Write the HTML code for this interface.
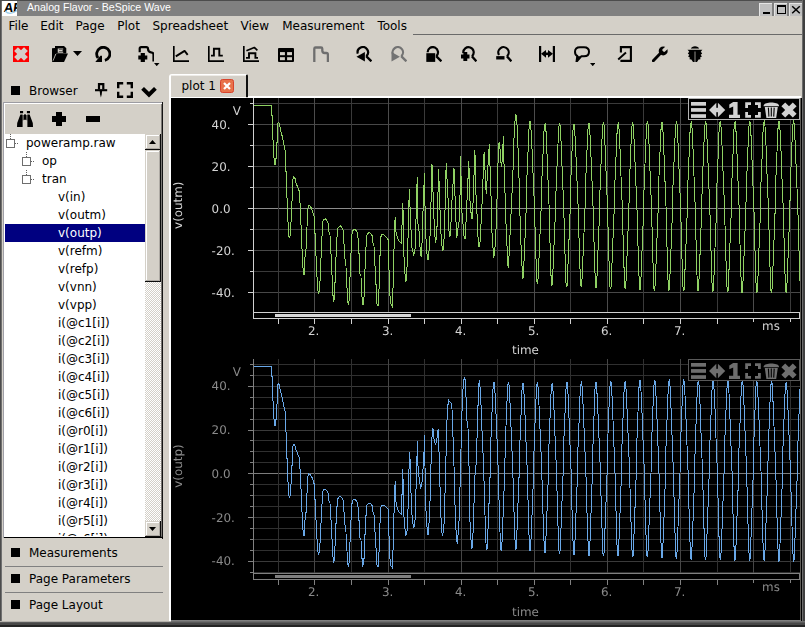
<!DOCTYPE html><html><head><meta charset="utf-8"><title>BeSpice Wave</title><style>
html,body{margin:0;padding:0;background:#d4d0c8;overflow:hidden}
#win{position:relative;width:805px;height:627px;overflow:hidden;background:#d4d0c8}
#win div,#win svg{position:absolute;display:block}
.t{white-space:nowrap}
</style></head><body><div id="win">
<div style="left:0px;top:0px;width:805px;height:1px;background:#4c4c4c;"></div>
<div style="left:0px;top:1px;width:805px;height:15px;background:#808080;"></div>
<div style="left:2px;top:1px;width:15px;height:15px;background:#fff;"></div>
<div class="t" style="left:2px;top:1px;width:15px;height:15px;overflow:hidden"><span style="position:absolute;left:1.6px;top:-1px;font:bold 13px/15px 'Liberation Sans',sans-serif;color:#000;letter-spacing:-0.2px;transform:skewX(-7deg);display:block">AF</span></div>
<svg style="left:2px;top:10px;" width="15" height="6" viewBox="0 0 15 6"><path d="M3 1 C6 4.2 10 4.2 15 0.5" fill="none" stroke="#9ccce8" stroke-width="1.1"/></svg>
<div class="t " style="left:27px;top:-0.2px;font-size:10.6px;color:#fff;font-family:'Liberation Sans','Liberation Sans',sans-serif;line-height:15px">Analog Flavor - BeSpice Wave</div>
<div style="left:759px;top:3px;width:13px;height:13px;background:#c0c0c0;box-shadow:inset 1px 1px 0 #e4e4e4"></div>
<div style="left:774px;top:3px;width:13px;height:13px;background:#c0c0c0;box-shadow:inset 1px 1px 0 #e4e4e4"></div>
<div style="left:789px;top:3px;width:13px;height:13px;background:#c0c0c0;box-shadow:inset 1px 1px 0 #e4e4e4"></div>
<div style="left:763px;top:12px;width:7px;height:2px;background:#000;"></div>
<div style="left:777px;top:5px;width:7px;height:6px;border:1px solid #000;border-top-width:2px"></div>
<svg style="left:791px;top:5px;" width="10" height="9" viewBox="0 0 10 9"><path d="M1.2 1.3 L8.8 8.2 M8.8 1.3 L1.2 8.2" stroke="#000" stroke-width="1.5"/></svg>
<div class="t " style="left:8.4px;top:18.4px;font-size:12px;color:#000;font-family:'DejaVu Sans','Liberation Sans',sans-serif;line-height:17px">File</div>
<div class="t " style="left:40.2px;top:18.4px;font-size:12px;color:#000;font-family:'DejaVu Sans','Liberation Sans',sans-serif;line-height:17px">Edit</div>
<div class="t " style="left:75.5px;top:18.4px;font-size:12px;color:#000;font-family:'DejaVu Sans','Liberation Sans',sans-serif;line-height:17px">Page</div>
<div class="t " style="left:117.3px;top:18.4px;font-size:12px;color:#000;font-family:'DejaVu Sans','Liberation Sans',sans-serif;line-height:17px">Plot</div>
<div class="t " style="left:152.5px;top:18.4px;font-size:12px;color:#000;font-family:'DejaVu Sans','Liberation Sans',sans-serif;line-height:17px">Spreadsheet</div>
<div class="t " style="left:240.5px;top:18.4px;font-size:12px;color:#000;font-family:'DejaVu Sans','Liberation Sans',sans-serif;line-height:17px">View</div>
<div class="t " style="left:282.2px;top:18.4px;font-size:12px;color:#000;font-family:'DejaVu Sans','Liberation Sans',sans-serif;line-height:17px">Measurement</div>
<div class="t " style="left:377.4px;top:18.4px;font-size:12px;color:#000;font-family:'DejaVu Sans','Liberation Sans',sans-serif;line-height:17px">Tools</div>
<div style="left:413px;top:34px;width:389px;height:1px;background:#6a6a6a;"></div>
<svg style="left:13px;top:46px;" width="16" height="16" viewBox="0 0 16 16"><rect x="0" y="0" width="16" height="16" fill="#ff0000"/><g transform="translate(8 8) rotate(45)" fill="#d4d0c8"><rect x="-7" y="-2.7" width="14" height="5.4"/><rect x="-2.7" y="-7" width="5.4" height="14"/></g></svg>
<svg style="left:52px;top:46px;" width="16" height="16" viewBox="0 0 16 16"><path d="M0 2.3 L3 2 V0 H12 L14.3 2.3 V7.6 H4 L1.2 15.8 H0 Z" fill="#000"/><path d="M11.2 3 H6.3 V6.2 H11.2 M6.3 4.6 H10.6" fill="none" stroke="#d4d0c8" stroke-width="1.15"/><path d="M4 7.6 H16 L12 15.9 H0.3 Z" fill="#000"/><path d="M3.8 8 L1 14.8" stroke="#d4d0c8" stroke-width="0.8"/></svg>
<svg style="left:95px;top:46px;" width="16" height="16" viewBox="0 0 16 16"><path d="M9.9 14.3 A6.6 6.6 0 1 0 3.1 12" fill="none" stroke="#000" stroke-width="2.8"/><path d="M0.3 15.9 H7 V9.8 H5.4 Z" fill="#000"/></svg>
<svg style="left:138px;top:46px;" width="16" height="16" viewBox="0 0 16 16"><path d="M1.7 6.2 V2.6 Q1.7 1.2 3.1 1.2 H8.3 Q9.9 1.2 10 2.8 Q10.1 6.2 13 6.4 Q15.5 6.6 15.5 8.6 V15.6" fill="none" stroke="#000" stroke-width="2.2"/><path d="M0.3 11.5 H9.3 M4.8 7 V16" stroke="#000" stroke-width="4.2"/></svg>
<svg style="left:173px;top:46px;" width="16" height="16" viewBox="0 0 16 16"><path d="M0.8 0 V15.2 H16" fill="none" stroke="#000" stroke-width="1.7"/><path d="M2.8 10.4 L11.6 4.9 L14.7 8.8" fill="none" stroke="#000" stroke-width="1.9" stroke-linejoin="round"/></svg>
<svg style="left:208px;top:46px;" width="16" height="16" viewBox="0 0 16 16"><path d="M0.8 0 V15.2 H16" fill="none" stroke="#000" stroke-width="1.7"/><path d="M3 9.6 H5.9 V2.8 H11.3 V9.6 H14.8" fill="none" stroke="#000" stroke-width="1.9"/></svg>
<svg style="left:243px;top:46px;" width="16" height="16" viewBox="0 0 16 16"><path d="M0.8 0 V15.2 H16" fill="none" stroke="#000" stroke-width="1.7"/><path d="M3 11.9 H6 V7.3 H12.4 V11.9 H15" fill="none" stroke="#000" stroke-width="1.9"/><path d="M3.4 4.7 L11.3 1.5 L14.4 4.3" fill="none" stroke="#000" stroke-width="1.7" stroke-linejoin="round"/></svg>
<svg style="left:278px;top:46px;" width="16" height="16" viewBox="0 0 16 16"><rect x="0" y="2" width="16" height="14" rx="1" fill="#000"/><rect x="2" y="6.1" width="4.9" height="3.1" fill="#d4d0c8"/><rect x="9.1" y="6.1" width="4.9" height="3.1" fill="#d4d0c8"/><rect x="2" y="11.2" width="4.9" height="3" fill="#d4d0c8"/><rect x="9.1" y="11.2" width="4.9" height="3" fill="#d4d0c8"/></svg>
<svg style="left:313px;top:46px;" width="16" height="16" viewBox="0 0 16 16"><path d="M1.3 16 V2.8 Q1.3 1.5 2.6 1.5 H8 Q9.3 1.5 9.3 2.8 V4.5 Q9.3 7 11.8 7 H13.5 Q14.9 7 14.9 8.4 V16" fill="none" stroke="#6e6e6e" stroke-width="2.3"/></svg>
<svg style="left:356px;top:46px;" width="16" height="16" viewBox="0 0 16 16"><path d="M1.78 7.65 A5.2 5.2 0 1 1 10.28 10.16" fill="none" stroke="#000" stroke-width="2.2"/><path d="M10.20 10.10 L15.4 15.3" stroke="#000" stroke-width="2.4" stroke-linecap="butt"/><path d="M0.5 10.7 L8.9 6 V15.5 Z" fill="#000"/></svg>
<svg style="left:391px;top:46px;" width="16" height="16" viewBox="0 0 16 16"><path d="M2.30 8.90 A5.2 5.2 0 1 1 10.28 10.16" fill="none" stroke="#737373" stroke-width="2.2"/><path d="M10.20 10.10 L15.4 15.3" stroke="#737373" stroke-width="2.4" stroke-linecap="butt"/><path d="M8.9 10.7 L0.5 6 V15.5 Z" fill="#737373"/></svg>
<svg style="left:426px;top:46px;" width="16" height="16" viewBox="0 0 16 16"><path d="M1.60 6.30 A5.2 5.2 0 1 1 10.28 10.16" fill="none" stroke="#000" stroke-width="2.2"/><path d="M10.20 10.10 L15.4 15.3" stroke="#000" stroke-width="2.4" stroke-linecap="butt"/><rect x="0.3" y="7.2" width="8.9" height="8.7" fill="#000"/></svg>
<svg style="left:461px;top:46px;" width="16" height="16" viewBox="0 0 16 16"><path d="M2.35 7.12 A5.2 5.2 0 1 1 10.98 10.26" fill="none" stroke="#000" stroke-width="2.2"/><path d="M10.90 10.20 L15.4 15.3" stroke="#000" stroke-width="2.4" stroke-linecap="butt"/><path d="M0 10.5 H8.5 M4.3 6 V15" stroke="#000" stroke-width="3.9"/></svg>
<svg style="left:496px;top:46px;" width="16" height="16" viewBox="0 0 16 16"><path d="M3.00 9.00 A5.2 5.2 0 1 1 10.98 10.26" fill="none" stroke="#000" stroke-width="2.2"/><path d="M10.90 10.20 L15.4 15.3" stroke="#000" stroke-width="2.4" stroke-linecap="butt"/><path d="M0.2 11.8 H8.5" stroke="#000" stroke-width="3.4"/></svg>
<svg style="left:539px;top:46px;" width="16" height="16" viewBox="0 0 16 16"><path d="M1.1 0 V16 M14.9 0 V16" stroke="#000" stroke-width="2.2"/><path d="M2 7.8 L7 3.9 V11.7 Z M14 7.8 L9 3.9 V11.7 Z" fill="#000"/><path d="M6.5 7.8 H9.5" stroke="#000" stroke-width="2.6"/></svg>
<svg style="left:574px;top:46px;" width="16" height="16" viewBox="0 0 16 16"><path d="M6 1.3 H10 C13.5 1.3 15 3 15 5.8 C15 8.8 13 10.3 10 10.3 H7.2 L2.5 15.8 L3.3 10 C2 9.4 1 8 1 5.8 C1 3 2.5 1.3 6 1.3 Z" fill="none" stroke="#000" stroke-width="2" stroke-linejoin="round"/><path d="M3 10 L2.2 16 L7.4 10.6 Z" fill="#000"/></svg>
<svg style="left:617px;top:46px;" width="16" height="16" viewBox="0 0 16 16"><path d="M3.9 6.6 V1.1 H13.9 V14.9 H3.4" fill="none" stroke="#000" stroke-width="2.1"/><path d="M1.2 13.5 L9 6.5" stroke="#000" stroke-width="1.9"/></svg>
<svg style="left:652px;top:46px;" width="16" height="16" viewBox="0 0 16 16"><path d="M1.3 14.7 L9 6.8" stroke="#000" stroke-width="2.9" stroke-linecap="round"/><circle cx="11.2" cy="4.9" r="4.5" fill="#000"/><g transform="translate(11.2 4.9) rotate(-42)"><rect x="-0.3" y="-1.7" width="8" height="3.4" rx="1.2" fill="#d4d0c8"/></g></svg>
<svg style="left:687px;top:46px;" width="16" height="16" viewBox="0 0 16 16"><path d="M0.4 3.5 L15.5 3.5 L13.8 5.8 L15.2 7.4 L13.7 8.8 L14.9 10.6 L13.1 11.5 L13.5 13.3 L11.6 13.6 L10 16 H6 L4.3 13.6 L2.5 13.3 L2.9 11.5 L1.1 10.6 L2.3 8.8 L0.8 7.4 L2.2 5.8 Z" fill="#000"/><path d="M3.9 2.8 C4.2 -0.6 11.8 -0.6 12.1 2.8 Z" fill="#000"/><path d="M0 3.2 H16" stroke="#d4d0c8" stroke-width="0.8"/><path d="M8 5.5 V16" stroke="#d4d0c8" stroke-width="0.7"/></svg>
<svg style="left:73px;top:51px;" width="9" height="5" viewBox="0 0 9 5"><path d="M0 0 H9 L4.5 5 Z" fill="#000"/></svg>
<svg style="left:154px;top:63px;" width="5.5" height="3.2" viewBox="0 0 5.5 3.2"><path d="M0 0 H5.5 L2.75 3.2 Z" fill="#000"/></svg>
<svg style="left:589.8px;top:63px;" width="5.5" height="3.2" viewBox="0 0 5.5 3.2"><path d="M0 0 H5.5 L2.75 3.2 Z" fill="#000"/></svg>
<div style="left:11.4px;top:86.4px;width:8.6px;height:8.4px;background:#000;"></div>
<div class="t " style="left:29px;top:82px;font-size:12px;color:#000;font-family:'DejaVu Sans','Liberation Sans',sans-serif;line-height:18px">Browser</div>
<svg style="left:95px;top:82px;" width="13" height="16" viewBox="0 0 13 16"><path d="M4 7.5 V2.2 H8.3 V7.5" fill="none" stroke="#000" stroke-width="2.2"/><path d="M-0.3 8.2 H12.2" stroke="#000" stroke-width="2.1"/><path d="M4.7 9 H7.1 L6.7 12.5 L5.9 15.6 L5.1 12.5 Z" fill="#000"/></svg>
<svg style="left:117px;top:82px;" width="16" height="16" viewBox="0 0 16 16"><path d="M1.2 6.2 V1.2 H6.2 M9.8 1.2 H14.8 V6.2 M14.8 9.8 V14.8 H9.8 M6.2 14.8 H1.2 V9.8" fill="none" stroke="#000" stroke-width="2.4"/></svg>
<svg style="left:141px;top:86px;" width="17" height="12" viewBox="0 0 17 12"><path d="M1.6 2.4 L8 8.6 L14.4 2.4" fill="none" stroke="#000" stroke-width="4"/></svg>
<div style="left:3px;top:102px;width:160px;height:1px;background:#9c9ca2;"></div>
<div style="left:3px;top:102px;width:1px;height:436px;background:#a0a0a8;"></div>
<div style="left:4px;top:103px;width:158px;height:1px;background:#fff;"></div>
<div style="left:4px;top:103px;width:1px;height:434px;background:#fff;"></div>
<div style="left:162px;top:102px;width:1px;height:437px;background:#141414;"></div>
<div style="left:161px;top:104px;width:1px;height:434px;background:#7a7874;"></div>
<div style="left:4px;top:537px;width:159px;height:1px;background:#000;"></div>
<div style="left:5px;top:536px;width:157px;height:1px;background:#5a5a5a;"></div>
<svg style="left:17px;top:111px;" width="16" height="16" viewBox="0 0 16 16"><path d="M3 0 H6.1 V2.3 H3 Z M9.9 0 H13 V2.3 H9.9 Z" fill="#000"/><path d="M3.4 3.4 H5.6 L5.6 16 H0 L0.2 12 Z M10.4 3.4 H12.6 L15.8 12 L16 16 H10.4 Z" fill="#000"/><rect x="7" y="3.4" width="2" height="5.4" fill="#000"/><path d="M5.6 4 H7 V9 L5.6 9.5 Z M10.4 4 H9 V9 L10.4 9.5 Z" fill="#000" opacity="0.55"/></svg>
<svg style="left:51px;top:111px;" width="16" height="16" viewBox="0 0 16 16"><path d="M1 8.1 H15 M8 1 V15" stroke="#000" stroke-width="6" stroke-linejoin="round"/></svg>
<svg style="left:85px;top:111px;" width="16" height="16" viewBox="0 0 16 16"><path d="M1 8 H15" stroke="#000" stroke-width="6"/></svg>
<div style="left:5px;top:134px;width:140px;height:403px;background:#fff;"></div>
<div style="left:5px;top:133px;width:140px;height:403px;overflow:hidden">
<div class="t" style="left:21px;top:1px;font-size:12px;line-height:18px;color:#000;font-family:'DejaVu Sans',sans-serif">poweramp.raw</div>
<div class="t" style="left:37px;top:19px;font-size:12px;line-height:18px;color:#000;font-family:'DejaVu Sans',sans-serif">op</div>
<div class="t" style="left:37px;top:37px;font-size:12px;line-height:18px;color:#000;font-family:'DejaVu Sans',sans-serif">tran</div>
<div style="left:0px;top:91px;width:140px;height:18px;background:#000080"></div>
<div class="t" style="left:53px;top:55px;font-size:12px;line-height:18px;color:#000;font-family:'DejaVu Sans',sans-serif">v(in)</div>
<div class="t" style="left:53px;top:73px;font-size:12px;line-height:18px;color:#000;font-family:'DejaVu Sans',sans-serif">v(outm)</div>
<div class="t" style="left:53px;top:91px;font-size:12px;line-height:18px;color:#fff;font-family:'DejaVu Sans',sans-serif">v(outp)</div>
<div class="t" style="left:53px;top:109px;font-size:12px;line-height:18px;color:#000;font-family:'DejaVu Sans',sans-serif">v(refm)</div>
<div class="t" style="left:53px;top:127px;font-size:12px;line-height:18px;color:#000;font-family:'DejaVu Sans',sans-serif">v(refp)</div>
<div class="t" style="left:53px;top:145px;font-size:12px;line-height:18px;color:#000;font-family:'DejaVu Sans',sans-serif">v(vnn)</div>
<div class="t" style="left:53px;top:163px;font-size:12px;line-height:18px;color:#000;font-family:'DejaVu Sans',sans-serif">v(vpp)</div>
<div class="t" style="left:53px;top:181px;font-size:12px;line-height:18px;color:#000;font-family:'DejaVu Sans',sans-serif">i(@c1[i])</div>
<div class="t" style="left:53px;top:199px;font-size:12px;line-height:18px;color:#000;font-family:'DejaVu Sans',sans-serif">i(@c2[i])</div>
<div class="t" style="left:53px;top:217px;font-size:12px;line-height:18px;color:#000;font-family:'DejaVu Sans',sans-serif">i(@c3[i])</div>
<div class="t" style="left:53px;top:235px;font-size:12px;line-height:18px;color:#000;font-family:'DejaVu Sans',sans-serif">i(@c4[i])</div>
<div class="t" style="left:53px;top:253px;font-size:12px;line-height:18px;color:#000;font-family:'DejaVu Sans',sans-serif">i(@c5[i])</div>
<div class="t" style="left:53px;top:271px;font-size:12px;line-height:18px;color:#000;font-family:'DejaVu Sans',sans-serif">i(@c6[i])</div>
<div class="t" style="left:53px;top:289px;font-size:12px;line-height:18px;color:#000;font-family:'DejaVu Sans',sans-serif">i(@r0[i])</div>
<div class="t" style="left:53px;top:307px;font-size:12px;line-height:18px;color:#000;font-family:'DejaVu Sans',sans-serif">i(@r1[i])</div>
<div class="t" style="left:53px;top:325px;font-size:12px;line-height:18px;color:#000;font-family:'DejaVu Sans',sans-serif">i(@r2[i])</div>
<div class="t" style="left:53px;top:343px;font-size:12px;line-height:18px;color:#000;font-family:'DejaVu Sans',sans-serif">i(@r3[i])</div>
<div class="t" style="left:53px;top:361px;font-size:12px;line-height:18px;color:#000;font-family:'DejaVu Sans',sans-serif">i(@r4[i])</div>
<div class="t" style="left:53px;top:379px;font-size:12px;line-height:18px;color:#000;font-family:'DejaVu Sans',sans-serif">i(@r5[i])</div>
<div class="t" style="left:53px;top:397px;font-size:12px;line-height:18px;color:#000;font-family:'DejaVu Sans',sans-serif">i(@r6[i])</div>
</div>
<div style="left:6px;top:139px;width:7px;height:7px;border:1px solid #6e6e6e;background:#fff"></div>
<div style="left:22px;top:157px;width:7px;height:7px;border:1px solid #6e6e6e;background:#fff"></div>
<div style="left:22px;top:175px;width:7px;height:7px;border:1px solid #6e6e6e;background:#fff"></div>
<div style="left:15px;top:143px;width:3px;height:1px;background:none;background:repeating-linear-gradient(to right,#606060 0 1px,transparent 1px 2px)"></div>
<div style="left:10px;top:134px;width:1px;height:5px;background:none;background:repeating-linear-gradient(to bottom,#606060 0 1px,transparent 1px 2px)"></div>
<div style="left:31px;top:161px;width:3px;height:1px;background:none;background:repeating-linear-gradient(to right,#606060 0 1px,transparent 1px 2px)"></div>
<div style="left:26px;top:152px;width:1px;height:5px;background:none;background:repeating-linear-gradient(to bottom,#606060 0 1px,transparent 1px 2px)"></div>
<div style="left:31px;top:179px;width:3px;height:1px;background:none;background:repeating-linear-gradient(to right,#606060 0 1px,transparent 1px 2px)"></div>
<div style="left:26px;top:170px;width:1px;height:5px;background:none;background:repeating-linear-gradient(to bottom,#606060 0 1px,transparent 1px 2px)"></div>
<div style="left:145px;top:134px;width:16px;height:403px;background:#e9e7e3;background:repeating-conic-gradient(#fff 0 25%,#d4d0c8 0 50%) 0 0/2px 2px"></div>
<div style="left:145px;top:134px;width:16px;height:16px;background:#d4d0c8;box-shadow:inset -1px -1px 0 #0c0c0c,inset 1px 1px 0 #d4d0c8,inset -2px -2px 0 #aeaaa4,inset 2px 2px 0 #fff"></div>
<div style="left:145px;top:150px;width:16px;height:132px;background:#d4d0c8;box-shadow:inset -1px -1px 0 #0c0c0c,inset 1px 1px 0 #d4d0c8,inset -2px -2px 0 #aeaaa4,inset 2px 2px 0 #fff"></div>
<div style="left:145px;top:521px;width:16px;height:16px;background:#d4d0c8;box-shadow:inset -1px -1px 0 #0c0c0c,inset 1px 1px 0 #d4d0c8,inset -2px -2px 0 #aeaaa4,inset 2px 2px 0 #fff"></div>
<svg style="left:149px;top:140px;" width="7" height="4" viewBox="0 0 7 4"><path d="M0 4 L3.5 0 L7 4 Z" fill="#000"/></svg>
<svg style="left:149px;top:527px;" width="7" height="4" viewBox="0 0 7 4"><path d="M0 0 L3.5 4 L7 0 Z" fill="#000"/></svg>
<div style="left:11.4px;top:548.3px;width:8.6px;height:8.4px;background:#000;"></div>
<div class="t " style="left:29px;top:543.5px;font-size:12px;color:#000;font-family:'DejaVu Sans','Liberation Sans',sans-serif;line-height:18px">Measurements</div>
<div style="left:11.4px;top:574.3px;width:8.6px;height:8.4px;background:#000;"></div>
<div class="t " style="left:29px;top:569.5px;font-size:12px;color:#000;font-family:'DejaVu Sans','Liberation Sans',sans-serif;line-height:18px">Page Parameters</div>
<div style="left:11.4px;top:600.3px;width:8.6px;height:8.4px;background:#000;"></div>
<div class="t " style="left:29px;top:595.5px;font-size:12px;color:#000;font-family:'DejaVu Sans','Liberation Sans',sans-serif;line-height:18px">Page Layout</div>
<div style="left:5px;top:566px;width:158px;height:1px;background:#808080;"></div>
<div style="left:5px;top:592px;width:158px;height:1px;background:#808080;"></div>
<div style="left:169px;top:74px;width:79px;height:23px;background:#d4d0c8;border-left:2px solid #fff;border-top:1px solid #fff;border-right:2px solid #101010;border-top-left-radius:3px;border-top-right-radius:2px;box-sizing:border-box"></div>
<div style="left:171px;top:75px;width:75px;height:1px;background:#eeece8;"></div>
<div class="t " style="left:181.5px;top:77px;font-size:12px;color:#000;font-family:'DejaVu Sans','Liberation Sans',sans-serif;line-height:18px">plot 1</div>
<svg style="left:220px;top:79px;" width="14" height="14" viewBox="0 0 14 14"><rect x="0.5" y="0.5" width="13" height="13" rx="2" fill="#e8724a" stroke="#d8432c"/><path d="M4 4 L10 10 M10 4 L4 10" stroke="#fff" stroke-width="2.2"/></svg>
<div style="left:248px;top:96px;width:553px;height:2px;background:#fff;"></div>
<div style="left:171px;top:97px;width:75px;height:1px;background:#fff;"></div>
<div style="left:169px;top:96px;width:2px;height:525px;background:#fff;"></div>
<div style="left:171px;top:98px;width:631px;height:523px;background:#000;"></div>
<div style="left:800px;top:98px;width:1px;height:523px;background:#5e5c58;"></div>
<div style="left:171px;top:620px;width:630px;height:1px;background:#808080;"></div>
<svg style="left:0;top:0;will-change:transform" width="805" height="627" viewBox="0 0 805 627" shape-rendering="crispEdges" text-rendering="geometricPrecision"><path d="M254 292.5 H800" stroke="#484848"/>
<path d="M254 271.5 H800" stroke="#3a3a3a"/>
<path d="M254 250.5 H800" stroke="#484848"/>
<path d="M254 229.5 H800" stroke="#3a3a3a"/>
<path d="M254 208.5 H800" stroke="#8c8c8c"/>
<path d="M254 187.5 H800" stroke="#3a3a3a"/>
<path d="M254 166.5 H800" stroke="#484848"/>
<path d="M254 145.5 H800" stroke="#3a3a3a"/>
<path d="M254 124.5 H800" stroke="#484848"/>
<path d="M254 103.5 H800" stroke="#3a3a3a"/>
<path d="M278.5 98 V312" stroke="#3a3a3a"/>
<path d="M314.5 98 V312" stroke="#4c4c4c"/>
<path d="M351.5 98 V312" stroke="#3a3a3a"/>
<path d="M388.5 98 V312" stroke="#4c4c4c"/>
<path d="M424.5 98 V312" stroke="#3a3a3a"/>
<path d="M461.5 98 V312" stroke="#4c4c4c"/>
<path d="M497.5 98 V312" stroke="#3a3a3a"/>
<path d="M534.5 98 V312" stroke="#4c4c4c"/>
<path d="M570.5 98 V312" stroke="#3a3a3a"/>
<path d="M607.5 98 V312" stroke="#4c4c4c"/>
<path d="M643.5 98 V312" stroke="#3a3a3a"/>
<path d="M680.5 98 V312" stroke="#4c4c4c"/>
<path d="M717.5 98 V312" stroke="#3a3a3a"/>
<path d="M753.5 98 V312" stroke="#4c4c4c"/>
<path d="M790.5 98 V312" stroke="#3a3a3a"/>
<polyline points="253.5,105.5 271.4,105.5 271.7,115.4 272.6,116.3 272.6,139.7 273.5,140.5 273.5,157.0 274.3,158.5 274.3,164.6 275.6,164.6 275.6,158.9 276.4,158.0 276.4,143.2 277.3,142.3 277.3,124.0 278.3,122.3 279.2,123.2 280.4,129.3 282.2,136.3 283.9,145.0 285.3,151.0 285.7,171.0 286.5,172.0 286.9,198.0 287.7,199.0 287.7,221.8 288.6,222.7 288.6,235.7 289.5,237.4 290.3,235.7 290.3,222.7 291.2,221.8 291.2,201.5 292.3,200.6 292.3,182.3 293.5,177.1 294.9,178.0 296.1,183.2 297.8,187.6 299.2,191.0 299.9,202.3 300.4,207.0 300.4,224.4 301.7,225.3 301.7,248.7 302.7,249.6 302.7,267.9 303.4,268.7 303.4,274.5 304.6,274.5 304.6,267.9 305.3,249.6 306.0,248.7 306.0,227.9 307.0,227.0 307.4,209.6 308.8,205.5 310.0,206.0 311.7,208.7 313.5,214.0 314.3,217.4 314.7,233.0 315.7,234.8 315.7,255.7 316.6,256.6 317.0,276.6 317.8,278.3 317.8,290.5 318.7,293.0 319.6,290.5 319.6,281.8 320.4,280.0 320.4,259.2 321.3,257.4 321.3,236.6 322.2,235.7 322.5,221.8 323.9,219.5 325.1,218.8 326.5,220.0 328.3,223.5 329.1,233.0 330.0,234.8 330.3,253.0 331.2,254.0 331.4,274.0 332.3,275.7 332.3,294.0 333.1,295.7 333.5,301.8 334.3,299.0 334.9,282.7 335.7,281.0 335.7,257.4 336.6,256.6 337.0,237.4 337.8,235.7 337.8,228.7 339.0,226.7 340.1,225.8 341.8,227.5 343.4,230.5 343.9,243.5 344.8,245.3 345.1,264.4 346.0,266.1 346.2,286.0 347.0,287.9 347.4,301.0 348.3,304.4 349.1,301.0 349.5,278.3 350.3,276.6 350.5,254.0 351.4,252.2 351.7,234.8 352.6,233.1 353.0,230.5 354.3,229.0 356.0,230.5 357.5,233.0 358.2,240.0 358.7,253.0 359.9,254.8 360.0,274.0 361.0,275.7 361.3,295.7 362.2,297.4 362.7,305.3 363.5,303.5 363.9,297.4 364.4,295.7 364.8,269.6 365.7,267.9 365.7,247.9 366.5,246.1 366.5,235.7 367.7,234.0 369.1,232.6 370.9,233.6 372.6,236.6 373.1,244.4 374.0,246.1 374.3,264.4 375.2,266.1 375.6,283.5 376.4,285.3 376.6,301.0 377.3,305.6 378.7,305.6 379.0,288.7 379.9,287.0 379.9,255.7 380.7,254.0 381.0,236.6 381.8,234.8 383.9,234.8 386.5,237.4 388.3,240.0 388.6,269.6 389.5,271.3 389.5,292.2 391.0,304.4 392.3,306.5 392.8,295.7 393.7,262.7 394.6,224.4 395.4,216.6 395.8,231.3 397.2,236.6 398.9,240.9 401.2,243.2 401.9,231.3 402.4,202.9 403.3,214.0 403.6,247.9 404.7,271.3 405.9,281.8 406.7,274.8 407.6,254.0 408.5,219.2 409.3,189.3 410.7,224.4 412.0,247.9 413.7,254.8 414.9,252.2 415.8,226.1 417.2,177.1 418.0,224.4 419.3,233.1 420.3,252.2 421.2,256.6 421.9,247.0 422.7,219.2 424.5,173.1 425.3,224.4 426.7,252.2 428.0,260.0 428.8,254.0 430.2,233.1 432.0,164.4 434.2,224.4 435.4,242.7 436.3,238.3 437.2,223.5 438.6,169.3 440.7,229.6 441.9,245.3 442.9,251.0 444.1,238.3 445.0,210.5 446.2,163.2 448.5,207.0 448.8,229.6 449.9,237.4 450.7,229.6 451.6,207.0 454.0,168.4 455.4,207.0 456.3,229.6 456.8,238.3 457.7,229.6 458.9,224.4 459.8,207.0 460.7,156.3 461.5,207.0 462.7,220.9 464.1,236.6 465.0,239.2 465.9,224.4 466.7,207.0 468.8,161.5 470.2,207.0 471.1,213.1 472.0,219.2 472.8,208.7 474.9,150.2 476.3,207.0 477.2,215.7 478.0,236.6 478.9,247.3 480.1,241.8 481.0,224.4 481.9,207.0 484.1,152.3 486.2,193.7 489.3,144.1 491.4,207.0 492.0,233.0 493.7,258.3 494.9,248.7 496.3,224.4 496.8,207.0 497.7,172.8 498.6,145.0 499.3,142.3 500.7,155.4 501.2,166.7 502.4,160.0 503.3,136.3 504.1,167.6 505.0,192.8 505.5,207.0 506.2,229.6 507.3,252.2 508.1,267.9 509.3,252.2 510.6,220.9 511.4,207.0 513.2,165.8 514.0,138.0 515.4,115.0 516.6,116.3 517.2,129.3 518.4,156.3 519.4,191.9 520.1,219.2 521.2,250.5 522.4,273.1 522.4,273.1 522.5,274.0 522.6,275.1 522.6,276.1 522.7,277.5 522.7,278.5 522.8,279.1 522.8,279.2 523.3,277.3 523.9,263.9 525.0,238.1 526.4,203.8 526.8,180.2 528.1,149.6 529.0,129.0 529.6,122.4 530.1,121.1 530.6,122.4 531.8,143.8 533.0,173.1 534.3,202.3 535.3,237.4 536.2,265.3 536.9,281.1 537.4,283.5 537.9,281.6 538.6,268.0 539.7,241.8 541.2,207.0 541.7,183.2 543.1,152.1 544.0,131.2 544.7,124.5 545.2,123.2 545.7,124.5 546.7,145.9 547.8,175.1 549.0,204.2 549.9,239.3 550.7,267.1 551.3,282.9 551.8,285.3 552.4,283.4 553.0,269.7 554.1,243.4 555.6,208.4 556.2,184.4 557.6,153.1 558.5,132.2 559.1,125.4 559.7,124.1 560.2,125.4 561.3,146.9 562.4,176.3 563.7,205.7 564.6,241.0 565.5,269.0 566.1,284.9 566.6,287.3 567.1,285.3 567.7,271.5 568.8,244.9 570.2,209.5 570.6,185.1 571.9,153.5 572.8,132.3 573.4,125.4 573.9,124.1 574.4,125.4 575.6,146.9 576.8,176.3 578.1,205.7 579.1,241.0 580.0,269.0 580.7,284.9 581.2,287.3 581.7,285.3 582.4,271.4 583.5,244.6 585.0,209.0 585.5,184.6 586.9,152.7 587.8,131.4 588.5,124.5 589.0,123.2 589.5,124.5 590.6,146.3 591.8,176.1 593.0,205.8 594.0,241.5 594.9,269.9 595.5,285.9 596.0,288.4 596.5,286.4 597.2,272.4 598.2,245.4 599.7,209.6 600.1,185.0 601.5,152.9 602.3,131.5 603.0,124.5 603.5,123.2 604.0,124.5 605.1,146.4 606.2,176.3 607.5,206.2 608.4,242.0 609.3,270.5 609.9,286.6 610.4,289.1 611.0,287.1 611.6,273.0 612.7,246.0 614.2,210.0 614.8,185.2 616.2,153.1 617.1,131.5 617.7,124.5 618.3,123.2 618.8,124.5 619.9,146.4 621.0,176.3 622.3,206.2 623.2,242.0 624.1,270.5 624.7,286.6 625.2,289.1 625.7,287.1 626.4,273.0 627.4,246.0 628.9,210.0 629.3,185.2 630.7,153.1 631.5,131.5 632.2,124.5 632.7,123.2 633.2,124.5 634.4,146.5 635.6,176.4 636.9,206.4 637.9,242.3 638.8,271.0 639.5,287.1 640.0,289.6 640.5,287.6 641.2,273.4 642.2,246.1 643.7,209.8 644.1,184.9 645.5,152.4 646.3,130.7 647.0,123.6 647.5,122.3 648.0,123.6 649.1,145.8 650.2,176.1 651.5,206.4 652.4,242.7 653.3,271.7 653.9,288.0 654.4,290.5 654.9,288.5 655.6,274.2 656.7,246.8 658.1,210.3 658.6,185.2 660.0,152.6 660.9,130.7 661.6,123.6 662.1,122.3 662.6,123.6 663.7,145.8 664.8,176.1 666.0,206.4 666.9,242.7 667.7,271.7 668.3,288.0 668.8,290.5 669.3,288.5 670.0,274.2 671.1,246.9 672.5,210.5 673.0,185.5 674.4,152.9 675.3,131.1 676.0,124.0 676.5,122.7 677.0,124.0 678.2,146.3 679.3,176.7 680.6,207.0 681.6,243.4 682.4,272.4 683.1,288.8 683.6,291.3 684.1,289.3 684.8,274.9 685.9,247.3 687.3,210.5 687.8,185.3 689.2,152.5 690.1,130.5 690.8,123.4 691.3,122.0 691.8,123.4 692.9,145.7 694.0,176.2 695.2,206.7 696.1,243.2 696.9,272.3 697.5,288.8 698.0,291.3 698.5,289.3 699.2,274.9 700.3,247.3 701.7,210.5 702.2,185.3 703.6,152.5 704.5,130.5 705.2,123.4 705.7,122.0 706.2,123.4 707.4,145.8 708.5,176.5 709.8,207.1 710.8,243.9 711.6,273.1 712.3,289.6 712.8,292.2 713.3,290.2 714.0,275.6 715.0,247.8 716.5,210.8 716.9,185.3 718.3,152.2 719.1,130.0 719.8,122.9 720.3,121.5 720.8,122.9 722.0,145.4 723.2,176.1 724.5,206.8 725.5,243.7 726.4,273.1 727.1,289.6 727.6,292.2 728.1,290.2 728.8,275.6 729.8,247.8 731.3,210.8 731.7,185.3 733.1,152.2 733.9,130.0 734.6,122.9 735.1,121.5 735.6,122.9 736.7,145.5 737.8,176.4 739.1,207.3 740.0,244.4 740.9,273.9 741.5,290.5 742.0,293.1 742.6,291.0 743.2,276.5 744.3,248.5 745.8,211.2 746.4,185.7 747.8,152.4 748.7,130.1 749.3,122.9 749.9,121.5 750.4,122.9 751.5,145.5 752.6,176.4 753.9,207.3 754.8,244.4 755.7,273.9 756.3,290.5 756.8,293.1 757.3,291.0 758.0,276.4 759.0,248.4 760.5,211.1 760.9,185.4 762.3,152.1 763.1,129.7 763.8,122.5 764.3,121.1 764.8,122.5 766.0,145.2 767.1,176.1 768.4,207.1 769.4,244.3 770.2,273.8 770.9,290.5 771.4,293.1 771.9,291.0 772.6,276.4 773.7,248.4 775.1,211.1 775.6,185.4 777.0,152.1 777.9,129.7 778.6,122.5 779.1,121.1 779.6,122.5 780.8,145.2 781.9,176.1 783.2,207.1 784.2,244.3 785.0,273.8 785.7,290.5 786.2,293.1 786.7,291.0 787.3,276.5 788.4,248.5 789.8,211.2 790.3,185.7 791.6,152.4 792.5,130.1 793.1,122.9 793.6,121.5 794.1,122.9 795.3,145.5 796.5,176.4 797.8,207.3 798.8,244.4 799.7,273.9 800.0,281.1" fill="none" stroke="#8fd163" stroke-width="1" shape-rendering="crispEdges"/>
<path d="M253.5 98 V318.5 M253 312.5 H800 M253 318.5 H800 M799.5 312 V319" stroke="#d0d0d0" fill="none"/>
<path d="M248 292.5 H253" stroke="#d0d0d0"/>
<path d="M250 271.5 H253" stroke="#d0d0d0"/>
<path d="M248 250.5 H253" stroke="#d0d0d0"/>
<path d="M250 229.5 H253" stroke="#d0d0d0"/>
<path d="M248 208.5 H253" stroke="#d0d0d0"/>
<path d="M250 187.5 H253" stroke="#d0d0d0"/>
<path d="M248 166.5 H253" stroke="#d0d0d0"/>
<path d="M250 145.5 H253" stroke="#d0d0d0"/>
<path d="M248 124.5 H253" stroke="#d0d0d0"/>
<path d="M250 103.5 H253" stroke="#d0d0d0"/>
<path d="M278.5 319 V324" stroke="#d0d0d0"/>
<path d="M314.5 319 V324" stroke="#d0d0d0"/>
<path d="M351.5 319 V324" stroke="#d0d0d0"/>
<path d="M388.5 319 V324" stroke="#d0d0d0"/>
<path d="M424.5 319 V324" stroke="#d0d0d0"/>
<path d="M461.5 319 V324" stroke="#d0d0d0"/>
<path d="M497.5 319 V324" stroke="#d0d0d0"/>
<path d="M534.5 319 V324" stroke="#d0d0d0"/>
<path d="M570.5 319 V324" stroke="#d0d0d0"/>
<path d="M607.5 319 V324" stroke="#d0d0d0"/>
<path d="M643.5 319 V324" stroke="#d0d0d0"/>
<path d="M680.5 319 V324" stroke="#d0d0d0"/>
<path d="M717.5 319 V324" stroke="#d0d0d0"/>
<path d="M753.5 319 V322" stroke="#d0d0d0"/>
<path d="M790.5 319 V322" stroke="#d0d0d0"/>
<rect x="275" y="314" width="136" height="3" fill="#d8d8d8"/>
<text x="211.6" y="296.6" fill="#d4d4d4" font-family="DejaVu Sans, sans-serif" font-size="11.9">-40.</text>
<text x="211.6" y="254.6" fill="#d4d4d4" font-family="DejaVu Sans, sans-serif" font-size="11.9">-20.</text>
<text x="211.6" y="212.6" fill="#d4d4d4" font-family="DejaVu Sans, sans-serif" font-size="11.9">0.0</text>
<text x="211.6" y="170.6" fill="#d4d4d4" font-family="DejaVu Sans, sans-serif" font-size="11.9">20.</text>
<text x="211.6" y="128.6" fill="#d4d4d4" font-family="DejaVu Sans, sans-serif" font-size="11.9">40.</text>
<text x="241" y="114.8" text-anchor="end" fill="#d4d4d4" font-family="DejaVu Sans, sans-serif" font-size="11.9">V</text>
<text x="313.7" y="334.8" text-anchor="middle" fill="#d4d4d4" font-family="DejaVu Sans, sans-serif" font-size="11.9">2.</text>
<text x="387.7" y="334.8" text-anchor="middle" fill="#d4d4d4" font-family="DejaVu Sans, sans-serif" font-size="11.9">3.</text>
<text x="460.7" y="334.8" text-anchor="middle" fill="#d4d4d4" font-family="DejaVu Sans, sans-serif" font-size="11.9">4.</text>
<text x="533.7" y="334.8" text-anchor="middle" fill="#d4d4d4" font-family="DejaVu Sans, sans-serif" font-size="11.9">5.</text>
<text x="606.7" y="334.8" text-anchor="middle" fill="#d4d4d4" font-family="DejaVu Sans, sans-serif" font-size="11.9">6.</text>
<text x="679.7" y="334.8" text-anchor="middle" fill="#d4d4d4" font-family="DejaVu Sans, sans-serif" font-size="11.9">7.</text>
<text x="771" y="329.6" text-anchor="middle" fill="#d4d4d4" font-family="DejaVu Sans, sans-serif" font-size="11.9">ms</text>
<text x="525.5" y="354.4" text-anchor="middle" fill="#d4d4d4" font-family="DejaVu Sans, sans-serif" font-size="11.9">time</text>
<text transform="translate(182.2 205.2) rotate(-90)" text-anchor="middle" fill="#d4d4d4" font-family="DejaVu Sans, sans-serif" font-size="11.9">v(outm)</text>
<rect x="688.5" y="98.5" width="111" height="21" fill="#000" stroke="#b4b4b4"/>
<g shape-rendering="geometricPrecision"><g fill="#d2d2d2" stroke="none"><rect x="691" y="102" width="15" height="3.7"/><rect x="691" y="108.1" width="15" height="3.7"/><rect x="691" y="114.2" width="15" height="3.7"/><path d="M709 110 L716.3 102.8 V117.2 Z M725.2 110 L717.9 102.8 V117.2 Z"/><rect x="715" y="107.8" width="5" height="4.4"/><path d="M733.2 102 H737.6 V114.8 H740 V118 H729 V114.8 H733.2 V106.6 L729.3 108.2 V104.6 Z"/></g>
<path d="M746.6 108 V103.6 H751 M755 103.6 H759.4 V108 M759.4 112 V116.4 H755 M751 116.4 H746.6 V112" fill="none" stroke="#d2d2d2" stroke-width="2.8"/>
<g fill="#d2d2d2"><path d="M763.6 105.4 C765 101.6 777.6 101.6 779 105.4 V106.2 H763.6 Z"/><path d="M764.8 107 H777.8 L776.2 118 H766.4 Z"/></g><path d="M768.4 107.6 L768.9 116.6 M771.3 107.6 V116.6 M774.2 107.6 L773.7 116.6" stroke="#000" stroke-width="1.1"/>
<path d="M783.3 104.3 L794.7 115.7 M794.7 104.3 L783.3 115.7" stroke="#d2d2d2" stroke-width="5.4"/></g><path d="M254 572.5 H800" stroke="#303030"/>
<path d="M254 561.5 H800" stroke="#3a3a3a"/>
<path d="M254 550.5 H800" stroke="#303030"/>
<path d="M254 539.5 H800" stroke="#303030"/>
<path d="M254 528.5 H800" stroke="#303030"/>
<path d="M254 517.5 H800" stroke="#3a3a3a"/>
<path d="M254 506.5 H800" stroke="#303030"/>
<path d="M254 495.5 H800" stroke="#303030"/>
<path d="M254 484.5 H800" stroke="#303030"/>
<path d="M254 473.5 H800" stroke="#7c7c7c"/>
<path d="M254 462.5 H800" stroke="#303030"/>
<path d="M254 451.5 H800" stroke="#303030"/>
<path d="M254 440.5 H800" stroke="#303030"/>
<path d="M254 430.5 H800" stroke="#3a3a3a"/>
<path d="M254 419.5 H800" stroke="#303030"/>
<path d="M254 408.5 H800" stroke="#303030"/>
<path d="M254 397.5 H800" stroke="#303030"/>
<path d="M254 386.5 H800" stroke="#3a3a3a"/>
<path d="M254 375.5 H800" stroke="#303030"/>
<path d="M254 364.5 H800" stroke="#303030"/>
<path d="M278.5 359 V573" stroke="#303030"/>
<path d="M314.5 359 V573" stroke="#464646"/>
<path d="M351.5 359 V573" stroke="#303030"/>
<path d="M388.5 359 V573" stroke="#464646"/>
<path d="M424.5 359 V573" stroke="#303030"/>
<path d="M461.5 359 V573" stroke="#464646"/>
<path d="M497.5 359 V573" stroke="#303030"/>
<path d="M534.5 359 V573" stroke="#464646"/>
<path d="M570.5 359 V573" stroke="#303030"/>
<path d="M607.5 359 V573" stroke="#464646"/>
<path d="M643.5 359 V573" stroke="#303030"/>
<path d="M680.5 359 V573" stroke="#464646"/>
<path d="M717.5 359 V573" stroke="#303030"/>
<path d="M753.5 359 V573" stroke="#464646"/>
<path d="M790.5 359 V573" stroke="#303030"/>
<polyline points="253.5,366.3 271.4,366.3 271.7,376.3 272.6,377.2 272.6,400.7 273.5,401.5 273.5,418.1 274.3,419.6 274.3,425.7 275.6,425.7 275.6,420.1 276.4,419.2 276.4,404.6 277.3,403.7 277.3,385.7 278.3,384.0 279.2,384.9 280.4,390.9 282.2,397.8 283.9,406.3 285.3,412.3 285.7,431.9 286.5,432.9 286.9,458.5 287.7,459.5 287.7,481.9 288.6,482.8 288.6,495.6 289.5,497.3 290.3,495.8 290.3,484.4 291.2,483.6 291.2,465.9 292.3,465.1 292.3,449.1 293.5,444.5 294.9,445.3 296.1,450.2 297.8,454.3 299.2,457.5 299.9,468.1 300.4,472.5 300.4,488.7 301.7,489.6 301.7,511.5 302.7,512.3 302.7,529.4 303.4,530.2 303.4,535.6 304.6,535.6 304.6,529.7 305.3,513.3 306.0,512.5 306.0,493.9 307.0,493.1 307.4,477.5 308.8,473.8 310.0,474.3 311.7,476.7 313.5,481.6 314.3,484.7 314.7,498.9 315.7,500.6 315.7,519.7 316.6,520.5 317.0,538.8 317.8,540.4 317.8,551.5 318.7,553.8 319.6,551.6 319.6,544.0 320.4,542.5 320.4,524.3 321.3,522.8 321.3,504.6 322.2,503.8 322.5,491.7 323.9,489.7 325.1,489.1 326.5,490.2 328.3,493.3 329.1,501.7 330.0,503.2 330.3,519.3 331.2,520.2 331.4,537.9 332.3,539.4 332.3,555.6 333.1,557.1 333.5,562.5 334.3,560.1 334.9,545.9 335.7,544.4 335.7,523.9 336.6,523.2 337.0,506.5 337.8,505.0 337.8,498.9 339.0,497.2 340.1,496.4 341.8,497.9 343.4,500.5 343.9,512.0 344.8,513.6 345.1,530.4 346.0,531.9 346.2,549.5 347.0,551.2 347.4,562.7 348.3,565.7 349.1,562.7 349.5,542.6 350.3,541.1 350.5,521.1 351.4,519.5 351.7,504.1 352.6,502.6 353.0,500.3 354.3,499.0 356.0,500.3 357.5,502.5 358.2,508.6 358.7,520.0 359.9,521.6 360.0,538.3 361.0,539.8 361.3,557.3 362.2,558.8 362.7,565.7 363.5,564.1 363.9,558.9 364.4,557.4 364.8,534.9 365.7,533.4 365.7,516.2 366.5,514.6 366.5,505.7 367.7,504.2 369.1,503.0 370.9,503.9 372.6,506.5 373.1,513.3 374.0,514.7 374.3,530.7 375.2,532.1 375.6,547.3 376.4,548.8 376.6,562.5 377.3,566.5 378.7,566.5 379.0,551.8 379.9,550.4 379.9,523.2 380.7,521.8 381.0,506.7 381.8,505.1 383.9,505.1 386.5,507.4 388.3,509.6 388.6,535.5 389.5,537.0 389.5,555.2 391.0,565.9 392.3,567.7 392.8,557.3 393.7,525.6 394.6,488.8 395.4,481.3 395.8,500.8 397.2,507.7 398.9,512.1 401.2,514.3 401.9,502.5 402.4,469.5 403.3,483.4 403.6,511.2 404.7,526.9 405.9,535.6 407.1,530.3 408.0,509.5 408.8,480.8 409.3,452.3 410.7,466.0 411.1,500.8 412.3,519.9 413.7,527.7 414.9,523.4 415.8,495.6 416.7,466.0 417.5,441.3 418.0,466.0 418.9,476.4 420.7,488.6 421.9,483.4 422.7,471.2 423.6,466.0 424.5,435.3 425.0,466.0 425.5,500.8 426.7,525.1 428.0,534.7 428.8,526.9 429.9,506.0 430.7,471.2 431.6,450.0 432.3,428.3 433.3,430.0 434.2,441.0 435.4,444.0 436.7,442.0 437.5,431.0 438.4,430.0 439.4,466.0 439.8,479.9 440.7,513.0 441.9,532.1 442.7,536.4 444.1,523.4 445.0,493.8 445.9,461.3 446.7,427.4 447.6,406.6 448.8,400.5 451.1,403.1 452.0,409.2 452.8,435.3 453.7,442.2 454.0,466.0 454.9,502.5 456.0,529.5 457.2,544.3 458.4,530.3 459.3,516.4 460.1,483.4 460.1,466.0 461.0,449.2 461.5,428.3 462.4,398.7 463.6,380.5 464.5,378.2 465.5,380.5 465.9,397.0 466.7,398.7 467.1,426.6 468.0,428.3 468.5,452.7 469.0,466.0 469.0,486.9 469.9,519.9 471.1,541.7 472.0,548.6 472.8,539.0 473.7,513.0 474.9,476.4 475.8,466.0 476.0,465.0 476.3,457.8 476.8,444.0 477.5,425.6 477.7,413.0 478.4,396.5 478.8,385.5 479.1,382.0 479.3,381.3 479.8,382.7 481.0,405.0 482.2,435.4 483.6,465.8 484.6,502.3 485.5,531.4 486.2,547.8 486.7,550.3 487.2,548.3 487.8,534.0 488.9,506.6 490.3,470.1 490.7,445.1 492.0,412.5 492.9,390.6 493.5,383.5 494.0,382.2 494.5,383.6 495.7,405.9 496.9,436.3 498.1,466.7 499.1,503.2 500.0,532.3 500.7,548.7 501.2,551.2 501.7,549.2 502.3,534.9 503.4,507.5 504.8,471.0 505.2,446.0 506.5,413.4 507.4,391.5 508.0,384.4 508.5,383.1 509.0,384.4 510.2,406.4 511.4,436.3 512.7,466.3 513.7,502.2 514.6,530.9 515.3,547.0 515.8,549.5 516.3,547.5 516.9,533.4 517.9,506.2 519.3,470.1 519.8,445.3 521.1,413.1 521.9,391.4 522.5,384.4 523.0,383.1 523.5,384.4 524.7,406.6 525.8,436.9 527.1,467.2 528.1,503.5 528.9,532.4 529.6,548.7 530.1,551.2 530.6,549.2 531.2,534.9 532.3,507.6 533.7,471.2 534.1,446.2 535.4,413.6 536.3,391.8 536.9,384.7 537.4,383.4 537.9,384.8 539.1,407.1 540.4,437.7 541.7,468.2 542.7,504.8 543.7,534.0 544.4,550.5 544.9,553.0 545.4,551.0 546.0,536.5 547.1,508.9 548.5,472.1 548.9,446.8 550.2,413.9 551.1,391.9 551.7,384.8 552.2,383.4 552.7,384.8 553.9,407.3 555.1,437.9 556.4,468.6 557.4,505.4 558.3,534.7 559.0,551.2 559.5,553.8 560.0,551.7 560.7,537.2 561.7,509.2 563.2,471.9 563.6,446.4 565.0,413.1 565.8,390.8 566.5,383.6 567.0,382.2 567.5,383.6 568.6,406.4 569.7,437.5 571.0,468.6 571.9,505.9 572.8,535.6 573.4,552.4 573.9,555.0 574.4,552.9 575.1,538.3 576.1,510.2 577.6,472.8 578.0,447.1 579.4,413.6 580.2,391.2 580.9,384.0 581.4,382.6 581.9,384.0 583.2,406.8 584.4,438.0 585.8,469.1 586.8,506.5 587.8,536.2 588.5,553.0 589.0,555.6 589.5,553.5 590.1,538.8 591.1,510.5 592.4,472.9 592.9,447.1 594.1,413.4 594.9,390.9 595.5,383.6 596.0,382.2 596.5,383.6 597.7,406.5 599.0,437.8 600.3,469.1 601.3,506.7 602.3,536.6 603.0,553.5 603.5,556.1 604.0,554.0 604.6,539.1 605.7,510.7 607.1,472.7 607.5,446.7 608.8,412.8 609.7,390.0 610.3,382.7 610.8,381.3 611.3,382.7 612.5,405.8 613.6,437.3 614.9,468.9 615.9,506.7 616.7,536.8 617.4,553.8 617.9,556.4 618.4,554.3 619.0,539.4 620.1,510.9 621.5,472.9 621.9,446.8 623.2,412.8 624.1,390.1 624.7,382.7 625.2,381.3 625.7,382.7 626.9,405.9 628.2,437.5 629.5,469.0 630.5,507.0 631.5,537.1 632.2,554.2 632.7,556.8 633.2,554.7 633.8,539.7 634.9,510.9 636.3,472.5 636.7,446.2 638.0,411.9 638.9,388.9 639.5,381.5 640.0,380.1 640.5,381.5 641.7,404.9 642.9,436.8 644.2,468.7 645.2,507.0 646.1,537.5 646.8,554.6 647.3,557.3 647.8,555.2 648.5,540.2 649.5,511.3 651.0,473.0 651.4,446.6 652.8,412.3 653.6,389.3 654.3,381.9 654.8,380.5 655.3,381.9 656.5,405.4 657.7,437.3 658.9,469.2 659.9,507.6 660.8,538.1 661.5,555.3 662.0,558.0 662.5,555.9 663.1,540.7 664.2,511.7 665.6,473.1 666.0,446.6 667.3,412.1 668.2,389.0 668.8,381.5 669.3,380.1 669.8,381.5 670.9,405.1 672.1,437.3 673.3,469.5 674.3,508.1 675.2,538.9 675.8,556.2 676.3,558.9 676.8,556.8 677.5,541.6 678.5,512.4 680.0,473.6 680.4,447.0 681.8,412.3 682.6,389.0 683.3,381.5 683.8,380.1 684.3,381.5 685.5,405.2 686.7,437.6 688.0,469.9 689.0,508.7 689.9,539.6 690.6,557.0 691.1,559.7 691.6,557.6 692.2,542.4 693.3,513.2 694.7,474.5 695.1,447.8 696.4,413.2 697.3,389.9 697.9,382.4 698.4,381.0 698.9,382.4 700.1,406.0 701.2,438.2 702.5,470.4 703.5,508.9 704.3,539.7 705.0,557.0 705.5,559.7 706.0,557.6 706.7,542.4 707.8,513.2 709.2,474.5 709.7,447.8 711.1,413.2 712.0,389.9 712.7,382.4 713.2,381.0 713.7,382.4 714.9,406.0 716.0,438.2 717.3,470.4 718.3,508.9 719.1,539.7 719.8,557.0 720.3,559.7 720.8,557.6 721.5,542.4 722.6,513.2 724.0,474.5 724.5,447.8 725.9,413.2 726.8,389.9 727.5,382.4 728.0,381.0 728.5,382.4 729.6,406.1 730.7,438.5 732.0,470.8 732.9,509.6 733.8,540.5 734.4,557.9 734.9,560.6 735.4,558.4 736.1,543.2 737.1,514.0 738.6,475.1 739.0,448.4 740.4,413.6 741.2,390.3 741.9,382.7 742.4,381.3 742.9,382.7 744.1,406.4 745.3,438.7 746.6,471.0 747.6,509.7 748.5,540.5 749.2,557.9 749.7,560.6 750.2,558.4 750.8,543.2 751.8,514.0 753.2,475.1 753.6,448.4 754.9,413.6 755.7,390.3 756.3,382.7 756.8,381.3 757.3,382.7 758.5,406.4 759.7,438.7 761.0,471.0 762.0,509.7 762.9,540.5 763.6,557.9 764.1,560.6 764.6,558.5 765.3,543.3 766.3,514.2 767.8,475.5 768.2,448.9 769.6,414.3 770.4,391.1 771.1,383.6 771.6,382.2 772.1,383.6 773.3,407.3 774.5,439.6 775.8,471.9 776.8,510.6 777.7,541.4 778.4,558.8 778.9,561.5 779.4,559.3 780.0,544.1 781.1,514.9 782.5,476.0 782.9,449.3 784.2,414.5 785.1,391.2 785.7,383.6 786.2,382.2 786.7,383.6 787.9,407.3 789.2,439.6 790.5,471.9 791.5,510.6 792.5,541.4 793.2,558.8 793.7,561.5 794.2,559.3 794.8,544.1 795.8,514.9 797.2,476.0 797.7,449.3 799.0,414.5 799.8,391.2 800.0,388.6" fill="none" stroke="#69a8e8" stroke-width="1" shape-rendering="crispEdges"/>
<path d="M253.5 359 V579.5 M253 573.5 H800 M253 579.5 H800 M799.5 573 V580" stroke="#808080" fill="none"/>
<path d="M250 572.5 H253" stroke="#808080"/>
<path d="M248 561.5 H253" stroke="#808080"/>
<path d="M250 550.5 H253" stroke="#808080"/>
<path d="M250 539.5 H253" stroke="#808080"/>
<path d="M250 528.5 H253" stroke="#808080"/>
<path d="M248 517.5 H253" stroke="#808080"/>
<path d="M250 506.5 H253" stroke="#808080"/>
<path d="M250 495.5 H253" stroke="#808080"/>
<path d="M250 484.5 H253" stroke="#808080"/>
<path d="M248 473.5 H253" stroke="#808080"/>
<path d="M250 462.5 H253" stroke="#808080"/>
<path d="M250 451.5 H253" stroke="#808080"/>
<path d="M250 440.5 H253" stroke="#808080"/>
<path d="M248 430.5 H253" stroke="#808080"/>
<path d="M250 419.5 H253" stroke="#808080"/>
<path d="M250 408.5 H253" stroke="#808080"/>
<path d="M250 397.5 H253" stroke="#808080"/>
<path d="M248 386.5 H253" stroke="#808080"/>
<path d="M250 375.5 H253" stroke="#808080"/>
<path d="M250 364.5 H253" stroke="#808080"/>
<path d="M278.5 580 V585" stroke="#808080"/>
<path d="M314.5 580 V585" stroke="#808080"/>
<path d="M351.5 580 V585" stroke="#808080"/>
<path d="M388.5 580 V585" stroke="#808080"/>
<path d="M424.5 580 V585" stroke="#808080"/>
<path d="M461.5 580 V585" stroke="#808080"/>
<path d="M497.5 580 V585" stroke="#808080"/>
<path d="M534.5 580 V585" stroke="#808080"/>
<path d="M570.5 580 V585" stroke="#808080"/>
<path d="M607.5 580 V585" stroke="#808080"/>
<path d="M643.5 580 V585" stroke="#808080"/>
<path d="M680.5 580 V585" stroke="#808080"/>
<path d="M717.5 580 V585" stroke="#808080"/>
<path d="M753.5 580 V583" stroke="#808080"/>
<path d="M790.5 580 V583" stroke="#808080"/>
<rect x="275" y="575" width="136" height="3" fill="#808080"/>
<text x="211.6" y="565.4" fill="#8a8a8a" font-family="DejaVu Sans, sans-serif" font-size="11.9">-40.</text>
<text x="211.6" y="521.5" fill="#8a8a8a" font-family="DejaVu Sans, sans-serif" font-size="11.9">-20.</text>
<text x="211.6" y="477.6" fill="#8a8a8a" font-family="DejaVu Sans, sans-serif" font-size="11.9">0.0</text>
<text x="211.6" y="433.7" fill="#8a8a8a" font-family="DejaVu Sans, sans-serif" font-size="11.9">20.</text>
<text x="211.6" y="389.8" fill="#8a8a8a" font-family="DejaVu Sans, sans-serif" font-size="11.9">40.</text>
<text x="241" y="375.5" text-anchor="end" fill="#8a8a8a" font-family="DejaVu Sans, sans-serif" font-size="11.9">V</text>
<text x="313.7" y="595.8" text-anchor="middle" fill="#8a8a8a" font-family="DejaVu Sans, sans-serif" font-size="11.9">2.</text>
<text x="387.7" y="595.8" text-anchor="middle" fill="#8a8a8a" font-family="DejaVu Sans, sans-serif" font-size="11.9">3.</text>
<text x="460.7" y="595.8" text-anchor="middle" fill="#8a8a8a" font-family="DejaVu Sans, sans-serif" font-size="11.9">4.</text>
<text x="533.7" y="595.8" text-anchor="middle" fill="#8a8a8a" font-family="DejaVu Sans, sans-serif" font-size="11.9">5.</text>
<text x="606.7" y="595.8" text-anchor="middle" fill="#8a8a8a" font-family="DejaVu Sans, sans-serif" font-size="11.9">6.</text>
<text x="679.7" y="595.8" text-anchor="middle" fill="#8a8a8a" font-family="DejaVu Sans, sans-serif" font-size="11.9">7.</text>
<text x="771" y="590.6" text-anchor="middle" fill="#8a8a8a" font-family="DejaVu Sans, sans-serif" font-size="11.9">ms</text>
<text x="525.5" y="615.9" text-anchor="middle" fill="#8a8a8a" font-family="DejaVu Sans, sans-serif" font-size="11.9">time</text>
<text transform="translate(181.6 466.09999999999997) rotate(-90)" text-anchor="middle" fill="#8a8a8a" font-family="DejaVu Sans, sans-serif" font-size="11.9">v(outp)</text>
<rect x="688.5" y="359.5" width="111" height="21" fill="#000" stroke="#5a5a5a"/>
<g shape-rendering="geometricPrecision"><g fill="#6e6e6e" stroke="none"><rect x="691" y="363" width="15" height="3.7"/><rect x="691" y="369.1" width="15" height="3.7"/><rect x="691" y="375.2" width="15" height="3.7"/><path d="M709 371 L716.3 363.8 V378.2 Z M725.2 371 L717.9 363.8 V378.2 Z"/><rect x="715" y="368.8" width="5" height="4.4"/><path d="M733.2 363 H737.6 V375.8 H740 V379 H729 V375.8 H733.2 V367.6 L729.3 369.2 V365.6 Z"/></g>
<path d="M746.6 369 V364.6 H751 M755 364.6 H759.4 V369 M759.4 373 V377.4 H755 M751 377.4 H746.6 V373" fill="none" stroke="#6e6e6e" stroke-width="2.8"/>
<g fill="#6e6e6e"><path d="M763.6 366.4 C765 362.6 777.6 362.6 779 366.4 V367.2 H763.6 Z"/><path d="M764.8 368 H777.8 L776.2 379 H766.4 Z"/></g><path d="M768.4 368.6 L768.9 377.6 M771.3 368.6 V377.6 M774.2 368.6 L773.7 377.6" stroke="#000" stroke-width="1.1"/>
<path d="M783.3 365.3 L794.7 376.7 M794.7 365.3 L783.3 376.7" stroke="#6e6e6e" stroke-width="5.4"/></g></svg>
<div style="left:0px;top:0px;width:1px;height:627px;background:#4c4c4c;"></div>
<div style="left:1px;top:1px;width:1px;height:626px;background:#707070;"></div>
<div style="left:802px;top:0px;width:1px;height:627px;background:#6c6c6c;"></div>
<div style="left:803px;top:0px;width:2px;height:627px;background:#404040;"></div>
<div style="left:0px;top:621px;width:171px;height:1px;background:#b4b1ab;"></div>
<div style="left:171px;top:621px;width:634px;height:1px;background:#6e6e6e;"></div>
<div style="left:0px;top:622px;width:805px;height:1px;background:#5a5a5a;"></div>
<div style="left:0px;top:623px;width:805px;height:2px;background:#484848;"></div>
<div style="left:0px;top:625px;width:805px;height:2px;background:#242424;"></div>
</div></body></html>
